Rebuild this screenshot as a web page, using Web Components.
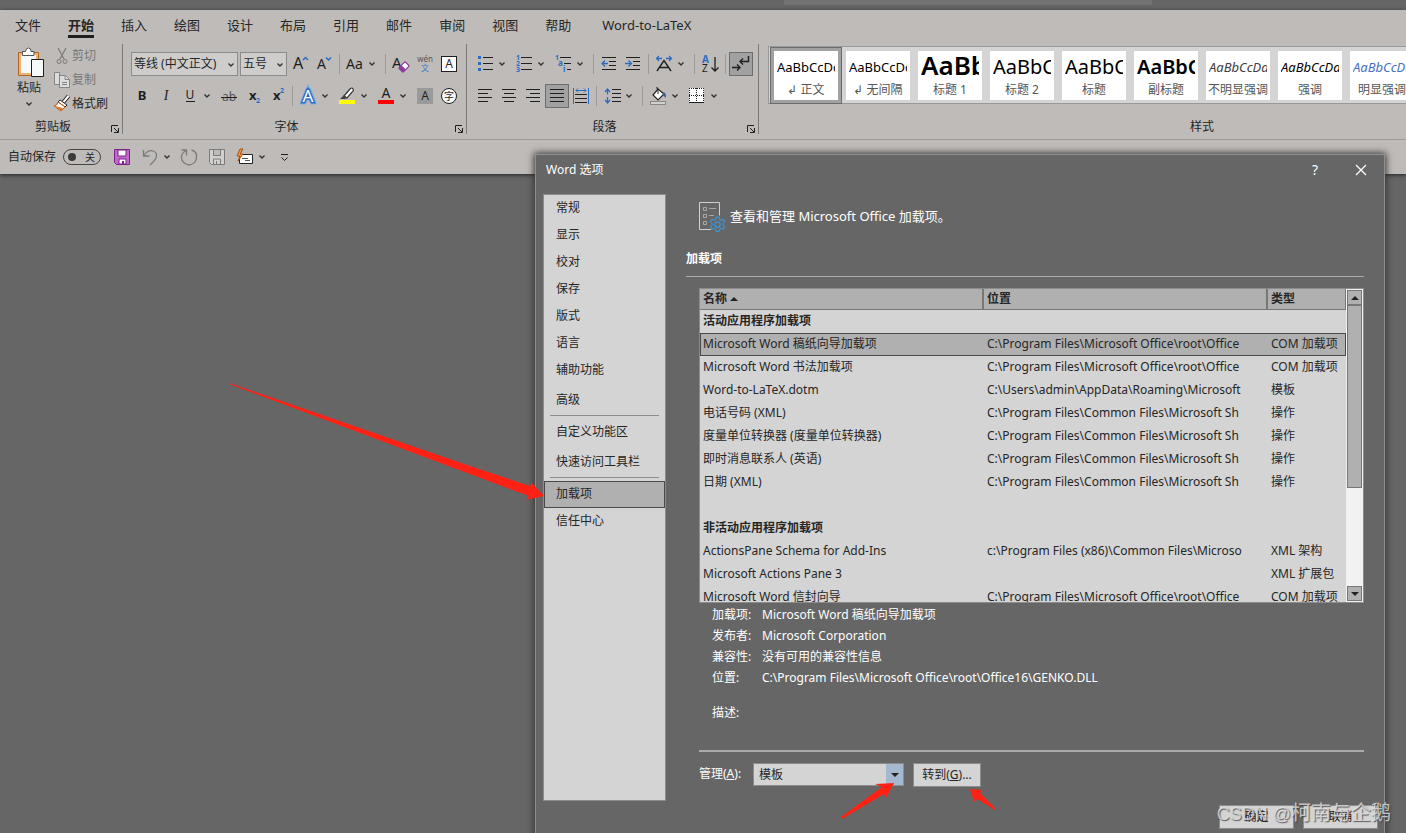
<!DOCTYPE html>
<html lang="zh-CN">
<head>
<meta charset="utf-8">
<title>Word 选项</title>
<style>
  html, body { height: 100%; margin: 0; }
  body {
    overflow: hidden;
    background: #666;
    color: #262626;
    font: 12px/16px "Noto Sans", "Noto Sans CJK SC", sans-serif;
  }
</style>
</head>
<body>
<word-app></word-app>

<script>
const RESET = `
  *, *::before { box-sizing: border-box; }
  button, select { font: inherit; color: inherit; margin: 0; padding: 0; border: 0; background: none; border-radius: 0; }
`;

function define(name, html, setup) {
  const template = document.createElement('template');
  template.innerHTML = html;
  customElements.define(name, class extends HTMLElement {
    constructor() {
      super();
      this.attachShadow({ mode: 'open' });
    }
    connectedCallback() {
      if (this.shadowRoot.childNodes.length) return;
      this.shadowRoot.append(template.content.cloneNode(true));
      if (setup) setup.call(this, this.shadowRoot);
    }
  });
}

const K = 'stroke="#1f1f1f" fill="none"';
const B = 'stroke="#2b6cc4" fill="none"';
const G = 'stroke="#7a7a7a" fill="none"';
const lines = (rows, attrs = K) => `<path ${attrs} d="${rows.map(([x1, x2, y]) => `M${x1} ${y}.5H${x2}`).join('')}"/>`;
const glyph = (t, x, y, s, extra = '') => `<text x="${x}" y="${y}" font-size="${s}" ${extra}>${t}</text>`;
const CARET = '<path d="M2.5 10.5l2.5 2.5 2.5-2.5" stroke="#333" stroke-width="1.4" fill="none"/>';

const ICONS = {
  grow: glyph('A', 5, 17, 16) + `<path ${B} stroke-width="1.5" d="M15 8l2.5-2.5L20 8"/>`,
  shrink: glyph('A', 5, 17, 14) + `<path ${B} stroke-width="1.5" d="M14 5.5L16.500 8 19 5.500"/>`,
  case: glyph('Aa', 3, 17, 14),
  clear: glyph('A', 3, 16, 15) + '<g transform="rotate(-45 15 15)"><rect x="10.500" y="12" width="9" height="6" rx="1" fill="#fff" stroke="#8e3a9d" stroke-width="1.300"/><path d="M10.500 12h4v6h-4z" fill="#8e3a9d"/></g>',
  phonetic: glyph('wén', 12, 10, 8, 'text-anchor="middle" fill="#555"') + glyph('文', 12, 19, 8, 'text-anchor="middle" fill="#3b78c8"'),
  border: '<rect x="4.500" y="4.500" width="15" height="15" fill="#fff" stroke="#1f1f1f"/>' + glyph('A', 12, 16, 12, 'text-anchor="middle"'),
  bold: glyph('B', 12, 16, 13, 'text-anchor="middle" font-weight="700"'),
  italic: glyph('I', 12, 16, 14, 'text-anchor="middle" font-style="italic" font-family="Liberation Serif"'),
  underline: glyph('U', 12, 15, 12, 'text-anchor="middle"') + `<path ${K} d="M8 17.500h9"/>`,
  strike: glyph('ab', 12, 17, 12, 'text-anchor="middle" fill="#555"') + `<path ${K} d="M4 13.500h16"/>`,
  sub: glyph('x', 8, 16, 13, 'font-weight="700"') + glyph('2', 15, 19, 7, 'font-weight="700" fill="#2b6cc4"'),
  sup: glyph('x', 8, 16, 13, 'font-weight="700"') + glyph('2', 15, 9, 7, 'font-weight="700" fill="#2b6cc4"'),
  effects: glyph('A', 12, 18, 17, 'text-anchor="middle" fill="#fff" stroke="#8db4e2" stroke-width="5"') + glyph('A', 12, 18, 17, 'text-anchor="middle" fill="#fff" stroke="#2b6cc4" stroke-width="3" paint-order="stroke"'),
  highlight: '<path d="M9 12l6-7q2-2 3 0t-1 3l-5 6-3-2z" fill="#fff" stroke="#333" stroke-width="1.200"/><path d="M9 11l3 3-2 1H5z" fill="#444"/><rect x="4" y="16" width="16" height="4" fill="#ff0"/>',
  color: glyph('A', 12, 14, 14, 'text-anchor="middle"') + '<rect x="4" y="16" width="16" height="4" fill="#f00"/>',
  shade: '<rect x="4" y="4" width="16" height="16" fill="#999"/>' + glyph('A', 12, 16, 12, 'text-anchor="middle"'),
  enclose: '<circle cx="12" cy="12" r="7.500" fill="#f4f8f8" stroke="#1f1f1f"/>' + glyph('字', 12, 16, 10, 'text-anchor="middle"'),
  bullets: '<path fill="#2b6cc4" d="M5 4h3v3H5zM5 10h3v3H5zM5 16h3v3H5z"/>' + lines([[10, 20, 5], [10, 20, 11], [10, 20, 17]]),
  numbers: ['1', '2', '3'].map((n, i) => glyph(n, 4, 8 + i * 6, 7, 'font-weight="700" fill="#2b6cc4"')).join('') + lines([[9, 20, 5], [9, 20, 11], [9, 20, 17]]),
  multi: glyph('1', 4, 8, 7, 'font-weight="700" fill="#2b6cc4"') + glyph('a', 7, 14, 8, 'font-weight="700" fill="#2b6cc4"') + glyph('i', 12, 20, 8, 'font-weight="700" fill="#2b6cc4"') + lines([[9, 20, 5], [13, 20, 11], [16, 20, 17]]),
  outdent: lines([[5, 19, 5], [12, 19, 9], [12, 19, 13], [5, 19, 17]]) + `<path ${B} stroke-width="1.300" d="M11 11.500H5.500M8 8.500l-3 3 3 3"/>`,
  indent: lines([[5, 19, 5], [12, 19, 9], [12, 19, 13], [5, 19, 17]]) + `<path ${B} stroke-width="1.300" d="M4 11.500h6M7.500 8.500l3 3-3 3"/>`,
  scale: `<path ${K} stroke-width="1.400" d="M5 19l7-10.500L19 19M8 15.500h8"/><path ${B} stroke-width="1.300" d="M10 6.500H4.500M7 4L4.500 6.500 7 9M14 6.500h5.500M17 4l2.500 2.500L17 9"/>`,
  sort: glyph('A', 4, 11, 10, 'font-weight="700" fill="#2b6cc4"') + glyph('Z', 4, 20, 10) + `<path ${K} stroke-width="1.300" d="M17 5v14M13.500 15.500L17 19l3.500-3.500"/>`,
  marks: `<path ${K} stroke-width="1.400" d="M19.500 4v5.500h-8M14 6.500l-3 3 3 3M3 15.500h8M8 12.500l3 3-3 3"/>`,
  left: lines([[5, 19, 5], [5, 15, 9], [5, 19, 13], [5, 15, 17]]),
  center: lines([[5, 19, 5], [7, 17, 9], [5, 19, 13], [7, 17, 17]]),
  right: lines([[5, 19, 5], [9, 19, 9], [5, 19, 13], [9, 19, 17]]),
  justify: lines([[5, 19, 5], [5, 19, 9], [5, 19, 13], [5, 19, 17]]),
  spread: `<path ${B} d="M4.500 4v16M19.500 4v16M7 6.500h10M9 4.500l-2 2 2 2M15 4.500l2 2-2 2"/>` + lines([[6, 18, 10], [6, 18, 14], [6, 18, 18]]),
  spacing: `<path ${B} stroke-width="1.300" d="M7.500 5v5.500M7.500 13v6M5 8l2.500-3L10 8M5 16l2.500 3 2.500-3"/>` + lines([[12, 21, 5], [12, 21, 9], [12, 21, 13], [12, 21, 17]]),
  fill: '<path d="M12 5l6 5-6 6-5-5z" fill="#fff" stroke="#222" stroke-width="1.200"/><path d="M12 10V5q0-2-2-1" stroke="#222" fill="none"/><path d="M17 8q4 1 2.500 6L17 11z" fill="#2b5fae"/><rect x="4.500" y="17.500" width="15" height="3" fill="#d0d0d0" stroke="#888"/>',
  borders: '<rect x="4" y="4" width="15" height="15" fill="#fff"/><path stroke="#1f1f1f" fill="none" stroke-dasharray="1 1" d="M4.500 4v14M11.500 4v14M18.500 4v14M4 4.500h15M4 11.500h15"/><path stroke="#1f1f1f" d="M4 18.500h15"/>',
  save: '<path d="M4.500 4.500h15v15h-13l-2-2z" fill="#c06ac8" stroke="#7d1f8d"/><path d="M8 5h8v6H8zM9 14h7v5H9z" fill="#fff" stroke="#7d1f8d"/><path d="M12 16h2v3h-2z" fill="#7d1f8d"/>',
  save2: `<path stroke="#7a7a7a" fill="#d2d0ce" d="M4.500 4.500h15v15h-13l-2-2zM8.500 4.500v6h7v-6M8.500 19v-5h7v5M11.500 16v3"/>`,
  undo: `<path ${G} stroke-width="1.300" d="M5.500 5v6h6M5.500 11Q10 4.500 15 6t3 7q-2 4-6 7"/>`,
  redo: `<path ${G} stroke-width="1.300" d="M4.500 5h5v5.500M9.500 5.500Q4 8 4.500 13t7 7q7-.500 8-7t-5-8"/>`,
  mail: '<path d="M6.500 9.500h13v9h-13z" fill="#fff" stroke="#222"/><path d="M9 13.500h6M12 15.500h5" stroke="#555"/><path d="M7 4L4 11h3l-2 5 5-7H7l3-5z" fill="#e7a05a" stroke="#a8500f"/>',
  more: `<path ${K} d="M9 9.500h7M9.500 12.500l3 3 3-3"/>`,
  cut: `<path ${G} stroke-width="1.200" d="M8 4l6 11M16 4l-6 11"/><circle cx="9" cy="17.500" r="2" ${G}/><circle cx="15" cy="17.500" r="2" ${G}/>`,
  copy: '<g fill="#ddd" stroke="#858585"><path d="M4.500 4.500h5v12h-5zM9.500 7.500h6l4 4v8h-10z"/><path d="M15 7.500v4h4M12 14.500h5M12 16.500h5"/></g>',
  brush: '<path d="M18.500 4l-5 6" stroke="#222" stroke-width="4"/><path d="M18.500 4l-5 6" stroke="#fff" stroke-width="2"/><path d="M10 8l7 5-2 2-7-5z" fill="#fff" stroke="#222"/><path d="M8 10l7 5-4 4-7-5q3 0 4-4z" fill="#fff" stroke="#b85b14"/><path d="M5 14l6 5 2-3z" fill="#d9772b"/>'
};

/* Toolbar button: 24px icon, with a caret beside it when `split` is set. */
define('word-tool', `
  <style>${RESET}
    :host { display: block; flex: none; }
    button { display: flex; width: 24px; height: 24px; }
    :host([split]) button { width: 39px; }
    :host([wide-gap]) button { width: 35px; }
    svg { flex: none; display: block; }
    :host([pressed]) button { background: #a1a1a1; outline: 1px solid #6c6c6c; outline-offset: -1px; }
  </style>
  <button type="button"></button>`, function (root) {
  const button = root.querySelector('button');
  button.setAttribute('aria-label', this.getAttribute('label'));
  button.innerHTML = `<svg width="24" height="24" viewBox="0 0 24 24" fill="#1f1f1f">${ICONS[this.getAttribute('icon')]}</svg>` +
    (this.hasAttribute('split') ? `<svg width="10" height="24" viewBox="0 0 10 24">${CARET}</svg>` : '');
});

define('word-rule', `
  <style>:host { display: block; flex: none; width: 1px; height: 20px; margin: 2px 3px; background: #9c9996; }</style>`);

define('word-combo', `
  <style>${RESET}
    :host { display: block; flex: none; }
    label { display: flex; height: 24px; border: 1px solid #8b8b8b; background: #cfcdcb; align-items: center; }
    select { appearance: none; flex: 1; min-width: 0; padding-left: 2px; outline: 0; white-space: nowrap; }
    svg { flex: none; }
  </style>
  <label><select></select><svg width="12" height="21" viewBox="0 1 10 21">${CARET}</svg></label>`, function (root) {
  const select = root.querySelector('select');
  select.setAttribute('aria-label', this.getAttribute('label'));
  select.add(new Option(this.getAttribute('value')));
});

/* A titled section of the ribbon. */
define('ribbon-group', `
  <style>${RESET}
    :host { display: flex; flex-direction: column; flex: none; height: 90px; border-right: 1px solid #7c7a78; }
    .body { flex: 1; min-height: 0; }
    footer { display: grid; grid-template-columns: 1fr 16px; height: 16px; text-align: center; line-height: 17px; }
    button { width: 12px; height: 12px; margin-top: 6px; display: none; justify-self: end; }
    :host([launcher]) button { display: block; }
    svg { display: block; }
  </style>
  <div class="body"><slot></slot></div>
  <footer><span></span><button type="button" aria-label="更多选项"><svg width="12" height="12"><path ${K} d="M1.500 8V1.500H8M4 4l4 4M8.500 4v4.500H4"/></svg></button></footer>`, function (root) {
  root.querySelector('span').textContent = this.getAttribute('name');
});

define('ribbon-tabs', `
  <style>${RESET}
    :host { display: block; }
    nav { display: flex; gap: 27px; height: 34px; padding: 0 15px; font-size: 13px; line-height: 30px; }
    a { color: inherit; text-decoration: none; height: 28px; }
    a[aria-current] { font-weight: 700; border-bottom: 3px solid #1f1f1f; }
    a:last-child { margin-left: 4px; }
  </style>
  <nav>${['文件', '开始', '插入', '绘图', '设计', '布局', '引用', '邮件', '审阅', '视图', '帮助', 'Word-to-LaTeX']
    .map((t, i) => `<a href="#"${i === 1 ? ' aria-current="page"' : ''}>${t}</a>`).join('')}</nav>`);

define('clipboard-tools', `
  <style>${RESET}
    :host { display: flex; padding: 0 10px 0 8px; }
    .paste { width: 42px; height: 72px; padding-top: 3px; display: flex; flex-direction: column; align-items: center; }
    .paste span { line-height: 18px; }
    .side { display: flex; flex-direction: column; }
    .side button { display: flex; align-items: center; height: 24px; }
    .side svg { flex: none; margin-right: -2px; }
    .off { color: #777; }
    svg { display: block; }
  </style>
  <button class="paste" type="button">
    <svg width="30" height="32" viewBox="-2 0 30 32">
      <path d="M2.500 5.500h20v23h-20z" fill="#e9b477" stroke="#b3641f"/>
      <path d="M5 8h15v18H5z" fill="#f6fafa"/>
      <path d="M6.500 8.500V4.500h3Q10 1 12.500 1T15 4.500h3v4z" fill="#fff" stroke="#555"/>
      <path d="M15.500 12.500h12v17h-12z" fill="#f6fafa" stroke="#1f1f1f"/>
    </svg>
    <span>粘贴</span>
    <svg width="10" height="14" viewBox="0 5 10 14">${CARET}</svg>
  </button>
  <div class="side">
    <button type="button" class="off"><svg width="24" height="24">${ICONS.cut}</svg>剪切</button>
    <button type="button" class="off"><svg width="24" height="24">${ICONS.copy}</svg>复制</button>
    <button type="button"><svg width="24" height="24">${ICONS.brush}</svg>格式刷</button>
  </div>`);

define('style-tile', `
  <style>${RESET}
    :host { display: block; flex: none; }
    button { display: block; width: 72px; height: 57px; padding: 4px; }
    .card { display: block; height: 49px; padding: 0 3px; background: #fff; color: #555; overflow: hidden; }
    .preview { display: block; height: 31px; overflow: hidden; text-align: left; white-space: nowrap; color: #000; font-size: 13px; line-height: 32px; }
    .name { display: block; line-height: 16px; margin: 0 -3px; white-space: nowrap; text-align: center; }
    :host([selected]) button { background: #a1a1a1; outline: 1px solid #6c6c6c; outline-offset: -1px; }
    :host([look~="mid"]) .preview { font-size: 20px; }
    :host([look~="large"]) .preview { font-size: 26px; line-height: 28px; }
    :host([look~="bold"]) .preview { font-weight: 600; }
    :host([look~="italic"]) .preview { font-style: italic; }
    :host([look~="grey"]) .preview { color: #404040; }
    :host([look~="blue"]) .preview { color: #4472c4; }
  </style>
  <button type="button"><span class="card"><span class="preview">AaBbCcDd</span><span class="name"><slot></slot></span></span></button>`);

define('style-gallery', `
  <style>
    :host { display: flex; height: 58px; margin: 2px 0 0 9px; padding: 0 1px; border: 1px solid #999; background: #d4d4d4; }
  </style>
  <style-tile selected>↲ 正文</style-tile>
  <style-tile>↲ 无间隔</style-tile>
  <style-tile look="large bold">标题 1</style-tile>
  <style-tile look="mid">标题 2</style-tile>
  <style-tile look="mid">标题</style-tile>
  <style-tile look="mid bold">副标题</style-tile>
  <style-tile look="italic grey">不明显强调</style-tile>
  <style-tile look="italic">强调</style-tile>
  <style-tile look="italic blue">明显强调</style-tile>`);

define('quick-access', `
  <style>${RESET}
    :host { display: flex; align-items: center; gap: 4px; height: 34px; padding-left: 8px; border-top: 1px solid #9b9b9b; }
    label { display: flex; align-items: center; gap: 7px; margin-right: 5px; white-space: nowrap; }
    .switch { display: flex; align-items: center; width: 38px; height: 16px; border: 1px solid #444; border-radius: 8px; padding: 0 5px 0 4px; justify-content: space-between; font-size: 10px; }
    input { appearance: none; width: 8px; height: 8px; margin: 0; border-radius: 4px; background: #3b3b3b; }
  </style>
  <label>自动保存<span class="switch"><input type="checkbox"><span>关</span></span></label>
  <word-tool icon="save" label="保存"></word-tool>
  <word-tool icon="undo" split wide-gap label="撤消"></word-tool>
  <word-tool icon="redo" label="重复"></word-tool>
  <word-tool icon="save2" label="另存"></word-tool>
  <word-tool icon="mail" split wide-gap label="邮件"></word-tool>
  <word-tool icon="more" label="自定义快速访问工具栏"></word-tool>`);

const tools = list => list.split(' ').map(t => {
  if (t === '|') return '<word-rule></word-rule>';
  const name = t.replace(/[+*]/g, '');
  return `<word-tool icon="${name}" label="${name}"${t.includes('+') ? ' split' : ''}${t.includes('*') ? ' pressed' : ''}></word-tool>`;
}).join('');

define('word-ribbon', `
  <style>${RESET}
    :host { display: block; background: #bfbbb8; padding-bottom: 1px; box-shadow: 0 1px 4px #222; }
    .groups { display: flex; height: 95px; overflow: hidden; }
    .row { display: flex; height: 24px; margin-top: 8px; }
    .font { padding: 0 5px 0 7px; }
    .para { padding: 0 5px 0 6px; }
    .font .first { padding-left: 1px; }
    .fam { width: 107px; margin-right: 2px; }
    .size { width: 47px; margin-right: 1px; }
    .clip { width: 123px; }
    .styles { width: 903px; }
  </style>
  <ribbon-tabs></ribbon-tabs>
  <div class="groups">
    <ribbon-group class="clip" name="剪贴板" launcher><clipboard-tools></clipboard-tools></ribbon-group>
    <ribbon-group name="字体" launcher>
      <div class="font">
        <div class="row first"><word-combo class="fam" label="字体" value="等线 (中文正文)"></word-combo><word-combo class="size" label="字号" value="五号"></word-combo>${tools('grow shrink | case+ | clear phonetic border')}</div>
        <div class="row">${tools('bold italic underline+ strike sub sup | effects+ highlight+ color+ shade enclose')}</div>
      </div>
    </ribbon-group>
    <ribbon-group name="段落" launcher>
      <div class="para">
        <div class="row">${tools('bullets+ numbers+ multi+ | outdent indent | scale+ | sort | marks*')}</div>
        <div class="row">${tools('left center right justify* spread | spacing+ | fill+ borders+')}</div>
      </div>
    </ribbon-group>
    <ribbon-group class="styles" name="样式"><style-gallery></style-gallery></ribbon-group>
  </div>
  <quick-access></quick-access>`);

define('options-nav', `
  <style>${RESET}
    :host { display: block; background: #d4d4d4; border: 1px solid #8c8c8c; color: #262626; }
    nav { display: flex; flex-direction: column; }
    a { display: block; height: 27px; line-height: 26px; padding: 0 12px; color: inherit; text-decoration: none; }
    hr { width: auto; margin: 0 6px; border: 0; border-top: 1px solid #8c8c8c; }
    .tall { height: 31px; line-height: 32px; }
    .tall + .tall { height: 30px; line-height: 30px; }
    a[aria-current] { margin-top: 3px; background: #b0b0b0; outline: 1px solid #4a4a4a; outline-offset: -1px; line-height: 25px; }
  </style>
  <nav>
    <a href="#">常规</a><a href="#">显示</a><a href="#">校对</a><a href="#">保存</a><a href="#">版式</a><a href="#">语言</a><a href="#">辅助功能</a>
    <a href="#" class="tall">高级</a><hr>
    <a href="#" class="tall">自定义功能区</a><a href="#" class="tall">快速访问工具栏</a><hr>
    <a href="#" aria-current="page">加载项</a><a href="#">信任中心</a>
  </nav>`);

const OFFICE = 'C:\\Program Files\\Microsoft Office\\root\\Office';
const COMMON = 'C:\\Program Files\\Common Files\\Microsoft Sh';
const ROWS = [
  ['活动应用程序加载项'],
  ['Microsoft Word 稿纸向导加载项', OFFICE, 'COM 加载项'],
  ['Microsoft Word 书法加载项', OFFICE, 'COM 加载项'],
  ['Word-to-LaTeX.dotm', 'C:\\Users\\admin\\AppData\\Roaming\\Microsoft', '模板'],
  ['电话号码 (XML)', COMMON, '操作'],
  ['度量单位转换器 (度量单位转换器)', COMMON, '操作'],
  ['即时消息联系人 (英语)', COMMON, '操作'],
  ['日期 (XML)', COMMON, '操作'],
  [''],
  ['非活动应用程序加载项'],
  ['ActionsPane Schema for Add-Ins', 'c:\\Program Files (x86)\\Common Files\\Microso', 'XML 架构'],
  ['Microsoft Actions Pane 3', '', 'XML 扩展包'],
  ['Microsoft Word 信封向导', OFFICE, 'COM 加载项']
];

define('addin-table', `
  <style>${RESET}
    :host { display: flex; height: 315px; border: 1px solid #8c8c8c; background: #d4d4d4; color: #262626; overflow: hidden; }
    .view { flex: 1; min-width: 0; overflow: hidden; }
    table { width: 100%; table-layout: fixed; border-collapse: separate; border-spacing: 0; }
    th, td { padding: 0 3px; text-align: left; vertical-align: top; white-space: nowrap; overflow: hidden; height: 23px; line-height: 21px; font-weight: 400; }
    thead th { height: 21px; line-height: 20px; background: #b0b0b0; border-right: 2px solid #777; border-bottom: 1px solid #777; font-weight: 700; }
    thead th:last-child { border-right-width: 1px; }
    .name, .place { width: 284px; }
    .section th { font-weight: 700; }
    .picked { background: #b0b0b0; outline: 1px solid #4a4a4a; outline-offset: -1px; }
    .bar { flex: none; width: 17px; display: flex; flex-direction: column; padding: 1px; background: #f2f2f2; }
    .bar button, .thumb { border: 1px solid #777; background: #b0b0b0; width: 15px; flex: none; }
    .bar button { height: 15px; }
    .thumb { height: 183px; margin-bottom: auto; }
    svg { display: block; margin: auto; }
    th svg { display: inline-block; vertical-align: 2px; }
  </style>
  <div class="view"><table>
    <thead><tr><th class="name">名称 <svg width="8" height="4"><path d="M0 4l4-4 4 4z" fill="#222"/></svg></th><th class="place">位置</th><th>类型</th></tr></thead>
    <tbody>${ROWS.map((r, i) => r.length === 1
      ? `<tr class="section"><th colspan="3">${r[0]}</th></tr>`
      : `<tr${i === 1 ? ' class="picked"' : ''}>${r.map(c => `<td>${c}</td>`).join('')}</tr>`).join('')}</tbody>
  </table></div>
  <div class="bar">
    <button type="button" aria-label="向上滚动"><svg width="8" height="4"><path d="M0 4l4-4 4 4z" fill="#222"/></svg></button>
    <div class="thumb"></div>
    <button type="button" aria-label="向下滚动"><svg width="8" height="4"><path d="M0 0l4 4 4-4z" fill="#222"/></svg></button>
  </div>`);

define('addin-details', `
  <style>
    :host { display: block; }
    dl { display: grid; grid-template-columns: 50px 1fr; grid-auto-rows: 21px; line-height: 20px; margin: 0; padding: 2px 0 0 13px; }
    dd { margin: 0; }
    .last { margin-top: 14px; }
  </style>
  <dl>
    <dt>加载项:</dt><dd>Microsoft Word 稿纸向导加载项</dd>
    <dt>发布者:</dt><dd>Microsoft Corporation</dd>
    <dt>兼容性:</dt><dd>没有可用的兼容性信息</dd>
    <dt>位置:</dt><dd>C:\\Program Files\\Microsoft Office\\root\\Office16\\GENKO.DLL</dd>
    <dt class="last">描述:</dt><dd></dd>
  </dl>`);

define('dialog-button', `
  <style>${RESET}
    :host { display: block; }
    button { width: 100%; height: 24px; background: #d4d4d4; border: 1px solid #8c8c8c; color: #262626; line-height: 20px; }
  </style>
  <button type="button"><slot></slot></button>`);

define('manage-bar', `
  <style>${RESET}
    :host { display: flex; align-items: flex-start; border-top: 2px solid #ababab; padding-top: 11px; }
    label { width: 54px; line-height: 22px; white-space: nowrap; }
    .combo { display: flex; width: 151px; height: 23px; margin-right: 9px; border: 1px solid #8c8c8c; background: #d4d4d4; color: #262626; }
    select { appearance: none; flex: 1; min-width: 0; padding-left: 5px; }
    .drop { width: 17px; background: #a4b8d0; display: grid; place-items: center; }
    svg { display: block; }
    dialog-button { width: 68px; }
  </style>
  <label for="kind">管理(<u>A</u>):</label>
  <div class="combo"><select id="kind"><option>模板</option></select><span class="drop"><svg width="8" height="4"><path d="M0 0l4 4 4-4z" fill="#222"/></svg></span></div>
  <dialog-button>转到(<u>G</u>)...</dialog-button>`);

define('options-dialog', `
  <style>${RESET}
    :host { display: block; background: #666; color: #fff; border: 1px solid #8f8f8f; box-shadow: 0 0 7px 1px #333; }
    header { display: flex; align-items: center; height: 30px; padding: 0 16px 0 10px; }
    h1 { flex: 1; margin: 0; font-size: 12px; font-weight: 400; }
    header button { width: 14px; height: 16px; font-size: 14px; line-height: 16px; }
    header button + button { margin-left: 32px; }
    header svg { display: block; }
    .body { display: flex; padding: 9px 20px 0 7px; gap: 20px; }
    options-nav { flex: none; width: 123px; height: 607px; }
    main { flex: 1; min-width: 0; }
    .intro { display: flex; align-items: center; gap: 3px; height: 44px; margin-left: 12px; font-size: 13px; }
    h2 { font-size: 12px; line-height: 16px; margin: 13px 0 9px; font-weight: 700; }
    hr { margin: 0 0 11px; border: 0; border-top: 1px solid #ababab; }
    .inset { margin-left: 13px; }
    addin-details { height: 147px; }
    footer { display: flex; justify-content: flex-end; gap: 9px; padding: 4px 6px 20px; }
    footer dialog-button { width: 75px; }
  </style>
  <header><h1>Word 选项</h1>
    <button type="button" aria-label="帮助">?</button>
    <button type="button" aria-label="关闭"><svg width="14" height="16"><path d="M2 3l10 10M12 3L2 13" stroke="#fff" stroke-width="1.300"/></svg></button>
  </header>
  <div class="body">
    <options-nav></options-nav>
    <main>
      <div class="intro">
        <svg width="29" height="32" viewBox="0 -1 29 32" fill="none">
          <path d="M13 28.500H1.500v-27h20v13" stroke="#d0d0d0"/>
          <path d="M5.500 6.500h3v3h-3zM5.500 13.500h3v3h-3zM5.500 20.500h3v3h-3zM11 7.500h7M11 14.500h5" stroke="#a8a8a8"/>
          <path d="M18.500 16h3l.700 2.500 1.800 1 2.500-.700 1.500 2.600-1.800 1.800v2l1.800 1.800-1.500 2.600-2.500-.700-1.800 1-.700 2.500h-3l-.700-2.500-1.800-1-2.500.700-1.500-2.600 1.800-1.800v-2l-1.800-1.800 1.500-2.600 2.500.700 1.800-1z" stroke="#3b95d6" stroke-width="1.300" transform="translate(2 2) scale(.88)"/>
          <circle cx="19.500" cy="23.500" r="2.700" stroke="#3b95d6" stroke-width="1.300"/>
        </svg>
        <span>查看和管理 Microsoft Office 加载项。</span>
      </div>
      <h2>加载项</h2>
      <hr>
      <addin-table class="inset"></addin-table>
      <addin-details class="inset"></addin-details>
      <manage-bar class="inset"></manage-bar>
    </main>
  </div>
  <footer><dialog-button>确定</dialog-button><dialog-button>取消</dialog-button></footer>`);

/* Red pointers drawn over the windows. */
define('red-arrows', `
  <style>:host { display: block; pointer-events: none; } svg { display: block; }</style>
  <svg width="1000" height="833" fill="#ff2113">
    <path d="M229 383L470 466 530 486 532 483 544 496 526 500 529 496 470 474 229 384z"/>
    <path d="M841 817L882 787 875 784 894 783 886 798 884 794 842 819z"/>
    <path d="M970 789l12 1-2 3 16 16-1 1-18-11-3 3z"/>
  </svg>`);

define('word-app', `
  <style>
    :host { display: block; position: relative; height: 100vh; overflow: hidden; background: #666; }
    .title { height: 10px; display: grid; grid-template-columns: 784fr 368fr 254fr; }
    .search { grid-column: 2; height: 5px; background: #737373; }
    options-dialog { position: absolute; left: 535px; top: 154px; right: 21px; }
    red-arrows { position: absolute; left: 0; top: 0; }
    .mark { position: absolute; right: 15px; bottom: 6px; font-size: 20px; line-height: 26px; color: rgba(225,225,225,.8); text-shadow: 1px 1px 1px rgba(60,60,60,.8); white-space: nowrap; font-family: "Liberation Sans", "Noto Sans CJK SC", sans-serif; }
    .mark span { font-size: 18px; }
  </style>
  <div class="title"><div class="search"></div></div>
  <word-ribbon></word-ribbon>
  <options-dialog></options-dialog>
  <red-arrows></red-arrows>
  <div class="mark"><span>CSDN @</span>柯南与企鹅</div>`);
</script>
</body>
</html>
